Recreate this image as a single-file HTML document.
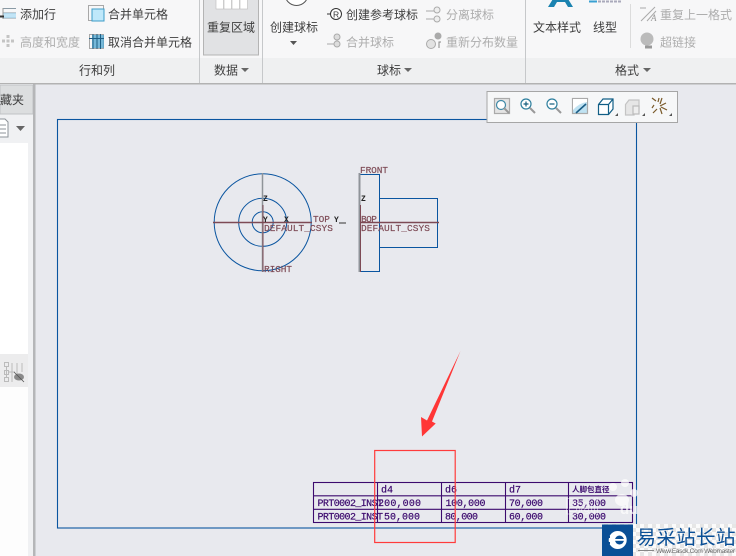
<!DOCTYPE html>
<html><head><meta charset="utf-8"><style>
html,body{margin:0;padding:0;background:#e8e9ee}
svg{display:block}
.c{font-family:"Liberation Sans","Noto Sans CJK SC",sans-serif;font-size:12px;fill:#3d3d3d}
.g{fill:#adadad}
.m{font-family:"Liberation Mono",monospace;font-size:9.5px;fill:#7d4a55;stroke:#7d4a55;stroke-width:.15}
.t{font-family:"Liberation Mono",monospace;font-size:10px;fill:#3c0a6e;stroke:#3c0a6e;stroke-width:.2}
</style></head><body>
<svg width="736" height="556" viewBox="0 0 736 556" xmlns="http://www.w3.org/2000/svg">
<defs><pattern id="ck" width="8" height="8" patternUnits="userSpaceOnUse"><rect width="8" height="8" fill="#fbfbfb"/><rect width="4" height="4" fill="#e6e6e6"/><rect x="4" y="4" width="4" height="4" fill="#e6e6e6"/></pattern></defs>
<rect width="736" height="556" fill="#e8e9ee"/>
<!-- ribbon -->
<rect width="736" height="58" fill="#f7f7f8"/>
<rect y="58" width="736" height="25" fill="#eff0f1"/>
<rect y="83" width="736" height="1.5" fill="#b2b2b2"/>
<g stroke="#c6c8ca" stroke-width="1"><path d="M199.5 0V83M262.5 0V83M525.5 0V83"/><path d="M630.5 4V48" stroke="#dcdcdc"/></g>
<!-- left panel -->
<rect x="0" y="84" width="33" height="472" fill="#f0f1f3"/>
<rect x="0" y="85" width="33" height="29" fill="#dcdedf" stroke="#c0c2c4"/>
<text class="c" x="0" y="104">藏夹</text>
<rect x="0" y="143" width="28" height="211" fill="#fff"/>
<rect x="0" y="354" width="28" height="33" fill="#ececed"/>
<rect x="0" y="387" width="28" height="169" fill="#fdfdfd"/>
<rect x="33" y="84" width="2.5" height="472" fill="#b5b6b8"/>
<path d="M-2 119H5L8 122V137H-2Z" fill="#fff" stroke="#8d9398"/><path d="M0 125H6M0 129H6M0 133H6" stroke="#8d9398"/>
<path d="M16 126H25L20.500 131Z" fill="#666"/>
<g fill="none" stroke="#bbb"><rect x="4.500" y="362.500" width="4" height="4"/><rect x="4.500" y="370.500" width="4" height="4"/><rect x="4.500" y="377.500" width="4" height="4"/><path d="M12 363V382M17 363V375M22 363V372M6.500 367V377M9 372H15"/></g>
<ellipse cx="19" cy="377" rx="5" ry="3.500" fill="#8a8a8a"/><path d="M14 372L24 382" stroke="#555" stroke-width="0.800"/>
<!-- row & col group -->
<g fill="none">
<path d="M3 8.500H16M3 13H16M3 18H16" stroke="#8a9aa5"/><rect x="3" y="13" width="13" height="5" fill="#a9dcf5" opacity=".7"/><path d="M3 8V19" stroke="#999"/>
<path d="M0 16.500H4" stroke="#333" stroke-width="2"/>
<path d="M2 41H14M8 35V47" stroke="#c4c4c4" stroke-width="3" stroke-dasharray="3 1.500"/>
<rect x="88.500" y="5.500" width="15" height="15" stroke="#a8a8a8"/><rect x="92" y="9" width="12" height="12" fill="#bfe8fa" stroke="#3d9cc8"/>
<rect x="89.500" y="34.500" width="14" height="14" stroke="#a8a8a8"/><rect x="92" y="35" width="12" height="13" fill="#55a8cf" opacity=".8"/><path d="M93 34V49M97 34V49M100.500 34V49M89 38.500H104" stroke="#1f5f85"/>
</g>
<text class="c" x="20" y="18.500">添加行</text>
<text class="c g" x="20" y="46.500">高度和宽度</text>
<text class="c" x="108" y="18.500">合并单元格</text>
<text class="c" x="108" y="46.500">取消合并单元格</text>
<text class="c" x="79" y="74.500">行和列</text>
<!-- data -->
<rect x="203.500" y="-2" width="55" height="57" fill="#e1e2e4" stroke="#b4b4b4"/>
<g fill="#fff" stroke="#bbb" stroke-width=".6"><rect x="216" y="-3" width="7.500" height="12"/><rect x="224" y="-3" width="7.500" height="12"/><rect x="232" y="-3" width="7.500" height="12"/><rect x="240" y="-3" width="7.500" height="12"/></g>
<text class="c" x="207" y="31.500">重复区域</text>
<text class="c" x="214" y="74.500">数据</text><path d="M241 68H249L245 72Z" fill="#666"/>
<!-- balloons -->
<path d="M285 -6A11.500 11.500 0 0 0 308 -6" fill="#fff" stroke="#555"/>
<text class="c" x="270" y="31.500">创建球标</text><path d="M290 41H297L293.500 45Z" fill="#555"/>
<path d="M327 14H332" stroke="#333"/><circle cx="336" cy="14" r="5.500" fill="#fff" stroke="#333"/><text x="333" y="17.500" font-family="Liberation Sans" font-size="8.500" fill="#333">R</text>
<text class="c" x="346" y="19">创建参考球标</text>
<text class="c g" x="346" y="46.500">合并球标</text>
<path d="M327 44H335" stroke="#aaa"/><circle cx="337" cy="37" r="3" fill="#ddd" stroke="#aaa"/><circle cx="337" cy="44" r="3" fill="#ddd" stroke="#aaa"/>
<path d="M426 11H434M426 19H434" stroke="#aaa"/><circle cx="437" cy="10" r="3" fill="#eee" stroke="#aaa"/><circle cx="437" cy="19" r="3" fill="#eee" stroke="#aaa"/>
<text class="c g" x="446" y="19">分离球标</text>
<circle cx="431" cy="44" r="4.500" fill="#e2e2e2" stroke="#aaa"/><circle cx="438" cy="36" r="3.500" fill="#aaa"/><path d="M439 48V42L441 42" stroke="#888" fill="none"/>
<text class="c g" x="446" y="46.500">重新分布数量</text>
<text class="c" x="377" y="74.500">球标</text><path d="M404 68H412L408 72Z" fill="#666"/>
<!-- format -->
<path d="M548 7L556 -6H565L573 7H568L565 2H557L554 7Z" fill="#1b83b0"/>
<text class="c" x="533" y="31.500">文本样式</text>
<path d="M589 1.500H597" stroke="#3aa0d2" stroke-width="2"/><path d="M598 1.500H621" stroke="#aab" stroke-width="2" stroke-dasharray="3 1"/>
<text class="c" x="593" y="31.500">线型</text>
<path d="M641 21L655 7M647 21L656 11M640 8L646 8" stroke="#aaa" fill="none"/><text x="651" y="21" font-family="Liberation Serif" font-size="9" font-style="italic" fill="#999">A</text>
<text class="c g" x="660" y="19">重复上一格式</text>
<circle cx="647" cy="39" r="6.500" fill="#bbb"/><path d="M645 47h7" stroke="#999" stroke-width="3"/>
<text class="c g" x="660" y="46.500">超链接</text>
<text class="c" x="615" y="74.500">格式</text><path d="M643 68H651L647 72Z" fill="#666"/>
<!-- sheet -->
<rect x="57.500" y="119.500" width="579" height="408.500" fill="none" stroke="#0a55a0" stroke-width="1.100"/>
<!-- toolbar -->
<rect x="487" y="91.500" width="190.500" height="31" fill="#f6f7f8" stroke="#a6a6a6"/>
<g fill="none" stroke-width="1.200">
<rect x="494.500" y="98.500" width="15" height="15" fill="#e4e4e4" stroke="#aaa"/><circle cx="501" cy="105" r="4.500" fill="#fff" stroke="#3f8aa8"/><path d="M504 108L509 113" stroke="#999" stroke-width="2"/>
<circle cx="526" cy="104" r="5" fill="#fff" stroke="#2e7f9e"/><path d="M523.500 104H528.500M526 101.500V106.500" stroke="#145d7d"/><path d="M530 108L535 113" stroke="#999" stroke-width="2"/>
<circle cx="552" cy="104" r="5" fill="#fff" stroke="#2e7f9e"/><path d="M549.500 104H554.500" stroke="#145d7d"/><path d="M556 108L561 113" stroke="#999" stroke-width="2"/>
<rect x="572.500" y="98.500" width="15" height="15" fill="#bfe2f2" stroke="#aaa"/><path d="M573 99H587V102Q579 103 573 110Z" fill="#fff" stroke="none"/><path d="M576 113L586 104" stroke="#1b5d86" stroke-width="1.600"/>
<path d="M598.500 104.500L603 99H613V109L608.500 114.500H598.500ZM598.500 104.500H608.500V114.500M608.500 104.500L613 99" fill="#fff" stroke="#125f86"/>
<path d="M625.500 104.500L629 100H639V109H634V115H625.500Z" fill="#e6e6e6" stroke="#c4c4c4"/><rect x="633" y="106" width="6" height="8" fill="#eee" stroke="#bbb"/>
<path d="M652 98L656 101M659 98L658 102M654 105L652 108M653 113L657 109M662 98L660 104M666 103L660 106M667 110L661 107M662 114L660 108" stroke="#7a5a2a"/>
</g>
<path d="M615 116h3v-3zM642 116h3v-3zM669 116h3v-3z" fill="#555"/>
<!-- views -->
<g fill="none" stroke="#0a55a0" stroke-width="1">
<circle cx="262.700" cy="222.300" r="48.500"/><circle cx="262.700" cy="222.300" r="24"/><circle cx="262.700" cy="222.300" r="10.500"/>
<rect x="359.500" y="174.500" width="20" height="97"/><path d="M379.500 198.500H437.500V247.500H379.500"/>
</g>
<path d="M262.500 173V272" stroke="#8f9499" stroke-width="1.500"/>
<path d="M263 205V222M263 222V272" stroke="#7d4a55" stroke-width="1"/>
<path d="M359.500 173V272" stroke="#8f9499" stroke-width="2"/><path d="M360.500 205V272" stroke="#7d4a55"/>
<path d="M213 222.500H312M360 222.500H439" stroke="#7d4a55" stroke-width="1.400"/>
<path d="M339 223H346" stroke="#333"/>
<text class="m" x="264" y="231" textLength="69">DEFAULT_CSYS</text>
<text class="m" x="361" y="231" textLength="69">DEFAULT_CSYS</text>
<text class="m" x="264" y="272" textLength="28">RIGHT</text>
<text class="m" x="360" y="173" textLength="28">FRONT</text>
<text class="m" x="313" y="222" textLength="17">TOP</text>
<text class="m" x="361" y="222" textLength="16">BOP</text>
<g font-family="Liberation Mono" font-size="8" font-weight="bold" fill="#222">
<text x="263" y="201">Z</text><text x="361" y="201">Z</text><text x="263" y="222">Y</text><text x="284" y="222">X</text><text x="334" y="222">Y</text>
</g>
<!-- table -->
<g fill="none" stroke="#3c0a6e" stroke-width="1.100">
<rect x="313.500" y="482.500" width="319" height="40"/>
<path d="M313.500 495.800H632.500M313.500 509.300H632.500M377.500 482.500V522.500M441.500 482.500V522.500M505.500 482.500V522.500M568.500 482.500V522.500"/>
</g>
<text class="t" x="381" y="492.500" textLength="12">d4</text><text class="t" x="445" y="492.500" textLength="12">d6</text><text class="t" x="509" y="492.500" textLength="12">d7</text>
<text class="t" x="317.500" y="506" textLength="65.500">PRT0002_INST</text><text class="t" x="378" y="506" textLength="43">200,000</text>
<text class="t" x="445.500" y="506" textLength="40">100,000</text><text class="t" x="509" y="506" textLength="34">70,000</text><text class="t" x="572" y="506" textLength="34">35,000</text>
<text class="t" x="317.500" y="519.500" textLength="65.500">PRT0002_INST</text><text class="t" x="384" y="519.500" textLength="36">50,000</text>
<text class="t" x="445" y="519.500" textLength="33">80,000</text><text class="t" x="509" y="519.500" textLength="34">60,000</text><text class="t" x="572" y="519.500" textLength="34">30,000</text>
<text x="572" y="492" font-family="Liberation Sans,Noto Sans CJK SC,sans-serif" font-size="7.500" font-weight="bold" fill="#3c0a6e">人脚包直径</text>
<!-- watermark -->
<g fill="#fff" opacity=".7"><text x="565" y="514" font-family="Liberation Sans" font-size="22" font-weight="bold" stroke="#fff" stroke-width=".6" fill="none">Bai</text><circle cx="613" cy="487" r="4"/><circle cx="625" cy="483" r="4"/><circle cx="634" cy="493" r="4"/><ellipse cx="622" cy="500" rx="7" ry="6"/><text x="620" y="514" font-family="Liberation Sans" font-size="15" font-weight="bold">du</text></g>
<!-- red annotations -->
<rect x="374.700" y="450.500" width="80.500" height="92" fill="none" stroke="#ff3b3b" stroke-width="1.200"/>
<path d="M460.500 351L432 421.500L435.700 423.500L422 436.500L421 417L427 420.500Z" fill="#ff3636"/>
<!-- logo -->
<rect x="602" y="524" width="134" height="32" fill="url(#ck)"/>
<rect x="602" y="524.500" width="31" height="31.500" fill="#0a4f96"/>
<circle cx="617.700" cy="540" r="9" fill="#fff"/><circle cx="619.500" cy="540" r="4.500" fill="#0a4f96"/><rect x="615" y="539" width="10" height="1.800" fill="#fff"/>
<path d="M606 536h4v2h-4zM606 542h4v2h-4z" fill="#0a4f96"/>
<text x="636.500" y="544" font-family="Liberation Sans,Noto Sans CJK SC,sans-serif" font-size="19.500" fill="#0a4f96" textLength="99">易采站长站</text>
<path d="M638 550.500H654" stroke="#888"/>
<text x="656" y="553" font-family="Liberation Sans" font-size="6.500" fill="#666" textLength="79">Www.Easck.Com Webmaster</text>
</svg>
</body></html>
